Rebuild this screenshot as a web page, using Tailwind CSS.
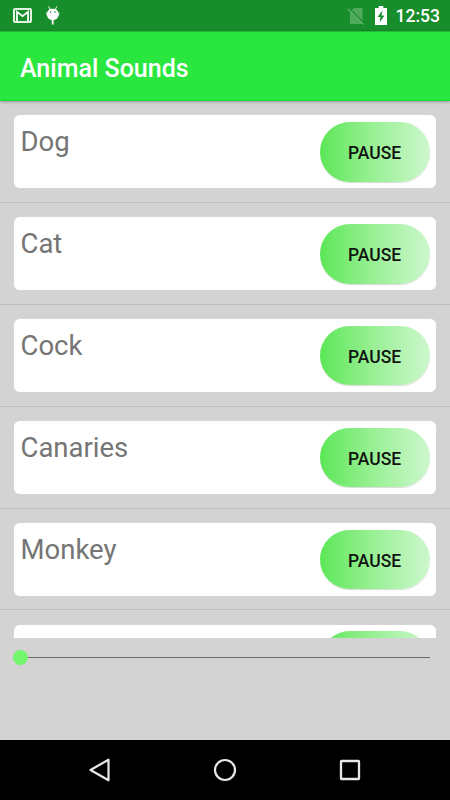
<!DOCTYPE html>
<html lang="en">
<head>
<meta charset="utf-8">
<title>Animal Sounds</title>
<script src="https://cdn.jsdelivr.net/npm/@tailwindcss/browser@4"></script>
</head>
<body class="w-[450px] h-[800px] overflow-hidden bg-[#d3d3d3] font-[Roboto,sans-serif] flex flex-col">
  <!-- Status bar -->
  <div class="h-[31px] shrink-0 bg-[#188d2b] flex items-center pl-[13px] pr-[10px] text-white">
    <svg class="w-[19px] h-[15px]" viewBox="0 0 19 15"><rect x="1" y="1" width="17" height="13" rx="1" fill="none" stroke="#e4f3e6" stroke-width="2"/><path d="M4 13V3.800L9.500 8.200l5.500-4.400V13" fill="none" stroke="#fff" stroke-width="1.800"/></svg>
    <svg class="w-[14px] h-[19px] ml-[14px]" viewBox="0 0 14 19"><path d="M2.800 .8l1.300 2.500M10.700 .8l-1.300 2.500" stroke="#fff" stroke-width="1" stroke-linecap="round"/><path d="M.5 6.500L1.500 10M13 6.500L12 10" stroke="#fff" stroke-width="1"/><path d="M1.200 7C1.200 1.200 12.300 1.200 12.300 7V9.500C12.300 15.500 1.200 15.500 1.200 9.500Z" fill="#fff"/><path d="M6.700 13v5.500" stroke="#fff" stroke-width="1.800"/><circle cx="4.500" cy="6" r=".8" fill="#188d2b"/><circle cx="9" cy="6" r=".8" fill="#188d2b"/></svg>
    <div class="grow"></div>
    <svg class="w-[18px] h-[18px]" viewBox="0 0 18 18"><path d="M7 1h8.500v16H3V5z" fill="#4faa5e"/><path d="M1.800 1L17.800 17" stroke="#188d2b" stroke-width="1.500"/><path d="M.8 1.800L16.500 17.500" stroke="#5db06a" stroke-width="1.500"/></svg>
    <svg class="w-[12px] h-[19px] ml-[10px]" viewBox="0 0 12 19"><path d="M3.700 0h4.600v2H12v17H0V2h3.700z" fill="#fff"/><path d="M7.500 4.500L2.500 11H5.500L4.500 16.500L9.500 9.500H6.500z" fill="#188d2b"/></svg>
    <span class="ml-[8.500px] w-[44.500px] text-[17.500px] leading-[20px] font-medium whitespace-nowrap pt-[1.500px]">12:53</span>
  </div>
  <!-- App bar -->
  <header class="relative z-10 h-[70px] shrink-0 bg-[#29e73f] border-b border-[#08e331] border-t border-t-[#22b936] shadow-[0_1px_3px_rgba(0,0,0,0.3)] flex items-center pl-[20px] pt-[5px]">
    <h1 class="text-[25px] leading-[30px] font-medium text-white">Animal Sounds</h1>
  </header>
  <!-- Sound list -->
  <main id="list" class="h-[536.500px] shrink-0 overflow-hidden"></main>
  <!-- Seek bar -->
  <div class="h-[40px] shrink-0 pl-[12.500px] pr-[20px] flex items-center">
    <div class="w-[15px] h-[15px] rounded-full bg-[#73f56d]"></div>
    <div class="grow h-px bg-[#6b6b6b]"></div>
  </div>
  <!-- Navigation bar -->
  <nav class="mt-auto h-[60px] shrink-0 bg-black flex items-center justify-center gap-[101px]">
    <svg class="w-[24px] h-[24px]" viewBox="0 0 24 24" fill="none" stroke="#e8e8e8" stroke-width="2.200" stroke-linejoin="round"><path d="M2.500 12L20.500 1.700V22.300Z"/></svg>
    <svg class="w-[24px] h-[24px]" viewBox="0 0 24 24" fill="none" stroke="#e8e8e8" stroke-width="2.200"><circle cx="12" cy="12" r="10"/></svg>
    <svg class="w-[24px] h-[24px]" viewBox="0 0 24 24" fill="none" stroke="#e8e8e8" stroke-width="2.300"><rect x="3" y="3" width="18" height="18" rx=".5"/></svg>
  </nav>
  <script>
    const list = document.getElementById('list');
    ['Dog', 'Cat', 'Cock', 'Canaries', 'Monkey', ''].forEach(name => {
      list.insertAdjacentHTML('beforeend', `
        <div class="h-[101.900px] pl-[14px] pr-[14.400px] pt-[14.450px] border-b border-[#bfbfbf]">
          <div class="h-[72.500px] bg-white rounded-[6px] flex justify-between pl-[6.500px] pr-[6px] pt-[6.500px] shadow-[0_0_1px_rgba(255,255,255,0.6)]">
            <span class="text-[27.500px] leading-[39.500px] text-[#757575]">${name}</span>
            <button class="w-[110px] h-[59.700px] rounded-[30px] bg-linear-to-r from-[#5ae755] to-[#cdf7cd] text-[17.500px] font-medium text-[#101510] pt-[3px] shadow-[0_1px_1px_rgba(0,0,0,0.15)]">${name ? 'PAUSE' : ''}</button>
          </div>
        </div>`);
    });
  </script>
</body>
</html>
